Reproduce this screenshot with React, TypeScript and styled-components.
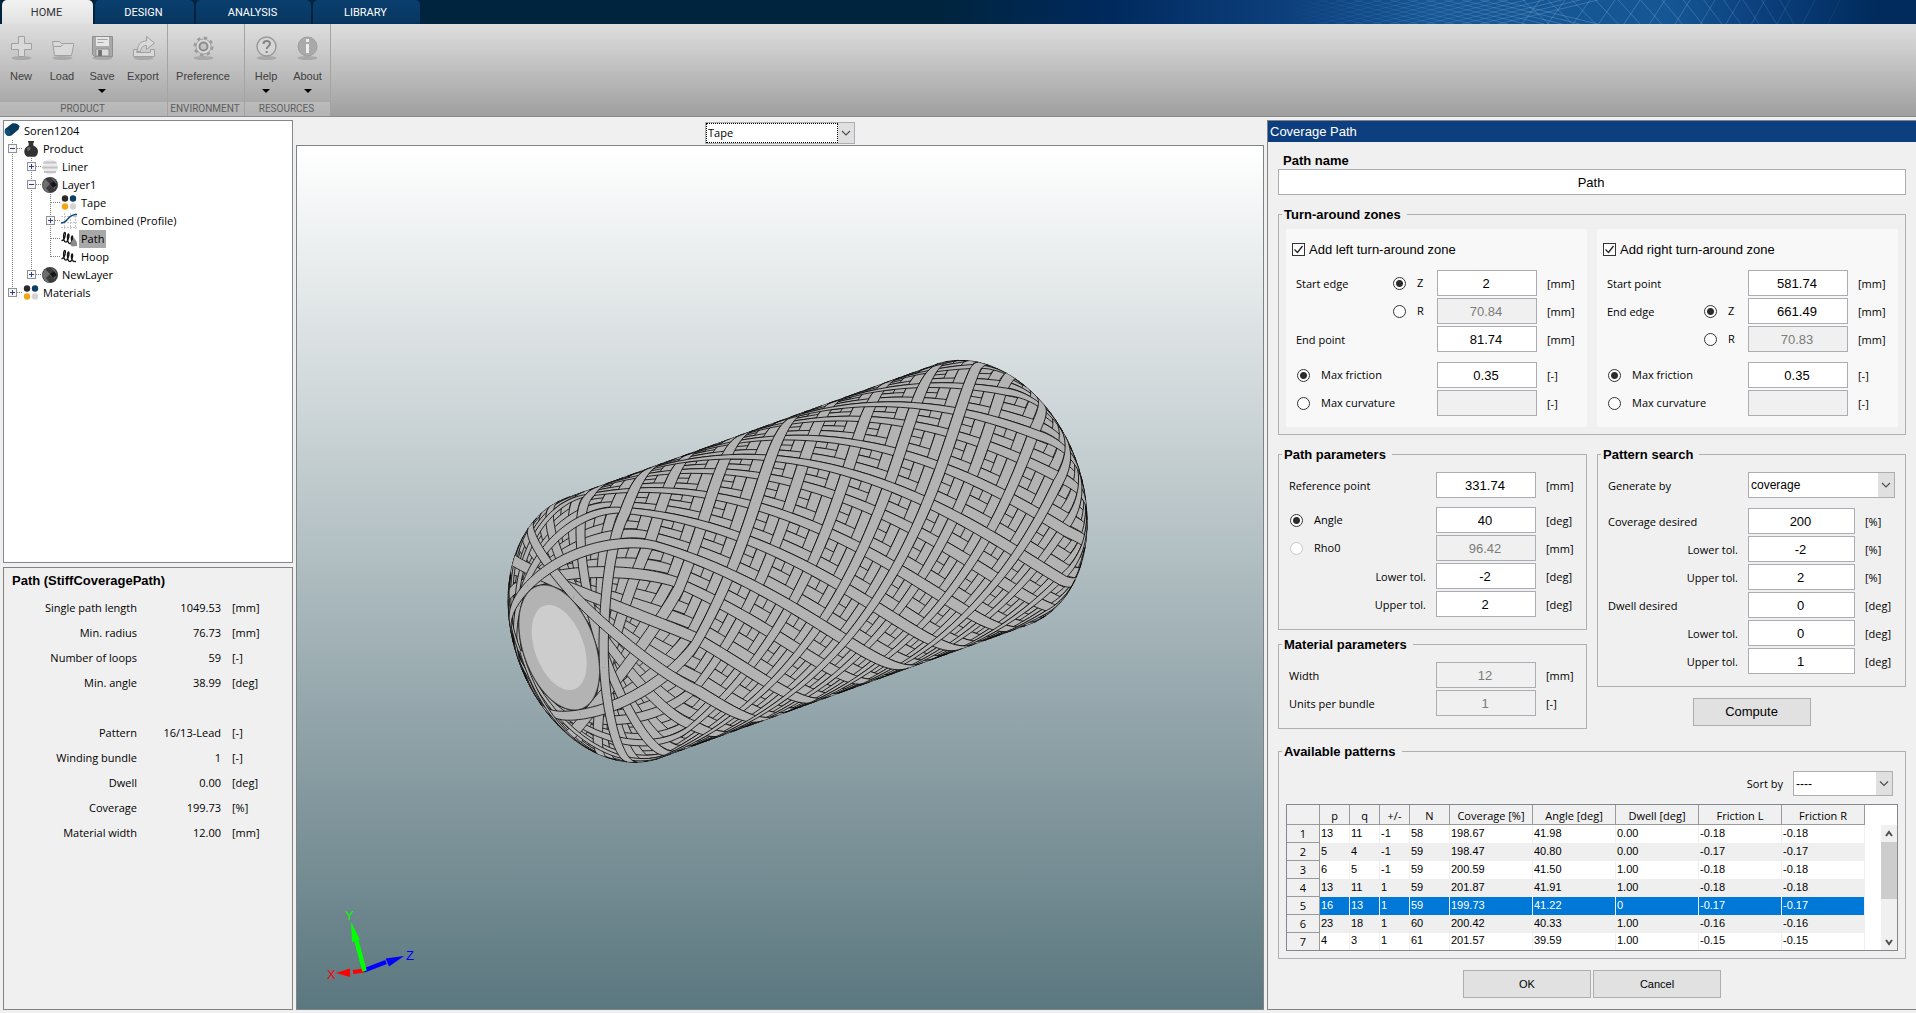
import React, { useMemo } from "react";
import styled, { createGlobalStyle, css } from "styled-components";

const UI = `"Open Sans", "Noto Sans", sans-serif`;
const ARIAL = `"Liberation Sans", Arial, sans-serif`;

const GlobalStyle = createGlobalStyle`
  *, *::before, *::after { box-sizing: border-box; }
  body { margin: 0; background: #f0f0f0; color: #000; font: 11px/16px ${UI}; }
  input, select, button { font: inherit; color: inherit; margin: 0; }
`;

const Shell = styled.div`
  display: flex;
  flex-direction: column;
  min-height: 100vh;
`;

/* ---------- ribbon ---------- */

const TabBar = styled.nav`
  display: grid;
  height: 24px;
  background: linear-gradient(90deg, #00243e 49%, #002a5e 58%, #0d3f7c 67%, #155694 75%, #155694 87%, #0b3f7c 92%, #002b5c 98%);
  overflow: hidden;
  & > * { grid-area: 1 / 1; }
`;

const TabList = styled.div`
  display: flex;
  gap: 2px;
  padding-left: 2px;
`;

const Tab = styled.button<{ $active?: boolean; $width: number }>`
  width: ${(p) => p.$width}px;
  border: 0;
  border-radius: 5px 5px 0 0;
  padding: 0 2px 2px 0;
  font: 11px/20px Roboto, ${ARIAL};
  color: ${(p) => (p.$active ? "#333" : "#fff")};
  background: ${(p) => (p.$active ? "linear-gradient(#f2f2f2, #dedede)" : "linear-gradient(#0a3f6e, #083762 75%, #042b4e)")};
`;

const Ribbon = styled.header`
  display: flex;
  height: 93px;
  border-bottom: 1px solid #8a8a8a;
  background: linear-gradient(#dedede, #9f9f9f);
`;

const Section = styled.section<{ $width: number }>`
  display: flex;
  flex-direction: column;
  width: ${(p) => p.$width}px;
  border-right: 1px solid #a4a4a4;
`;

const SectionTools = styled.div`
  display: flex;
  flex: 1;
`;

const SectionName = styled.div`
  height: 14px;
  padding-right: 2px;
  font: 10px/14px Roboto, ${ARIAL};
  text-align: center;
  color: #5e5e5e;
  background: rgba(255, 255, 255, 0.22);
`;

const Tool = styled.button<{ $width: number }>`
  display: flex;
  flex-direction: column;
  align-items: center;
  width: ${(p) => p.$width}px;
  border: 0;
  padding: 10px 0 0;
  background: none;
  color: #404040;
  font: 11px/16px ${ARIAL};
  & > svg { display: block; flex: none; }
  & > span { margin-top: 7px; }
`;

const Caret = styled.i`
  margin-top: 5px;
  border: 4px solid transparent;
  border-top-color: #000;
  border-bottom: 0;
`;

/* ---------- body ---------- */

const Workspace = styled.main`
  flex: 1;
  display: grid;
  grid-template-columns: 290px minmax(0, 1fr) 649px;
  gap: 3px;
  padding: 3px 0 3px 3px;
`;

const LeftColumn = styled.div`
  display: grid;
  grid-template-rows: 1fr 1fr;
  gap: 4px;
`;

const TreeBox = styled.ul`
  margin: 0;
  padding: 1px 0 0;
  list-style: none;
  border: 1px solid #828790;
  background: #fff;
  font: 12px/18px ${UI};
`;

const TreeRow = styled.li`
  display: flex;
  height: 18px;
  & > svg { flex: none; display: block; }
`;

const TreeLabel = styled.span<{ $selected?: boolean }>`
  margin-left: 2px;
  padding: 0 2px;
  font-size: 11px;
  background: ${(p) => (p.$selected ? "#a8a8a8" : "none")};
`;

const InfoBox = styled.section`
  border: 1px solid #828282;
  padding: 4px 8px;
`;

const Heading = styled.h2`
  margin: 0;
  font: bold 13px/18px ${ARIAL};
`;

const InfoGrid = styled.dl`
  display: grid;
  grid-template-columns: 125px 84px 1fr;
  grid-auto-rows: 25px;
  align-items: center;
  margin: 5px 0 0;
  & > dt, & > dd { margin: 0; text-align: right; }
`;

const InfoUnit = styled.dd`
  && { padding-left: 11px; text-align: left; }
`;

const InfoBreak = styled.div`
  grid-column: 1 / -1;
`;

const Stage = styled.div`
  display: flex;
  flex-direction: column;
`;

const StageBar = styled.div`
  display: flex;
  justify-content: center;
  height: 25px;
  padding-top: 2px;
`;

const Canvas3D = styled.div`
  flex: 1;
  min-height: 0;
  border: 1px solid #7f8385;
  background: linear-gradient(#ffffff, #5b777f);
  & > svg { display: block; width: 100%; height: 100%; }
`;

/* ---------- form controls ---------- */

const SelectFrame = styled.div<{ $width?: number; $height: number; $focus?: boolean }>`
  display: grid;
  grid-template-columns: 1fr 16px;
  width: ${(p) => (p.$width ? `${p.$width}px` : "auto")};
  height: ${(p) => p.$height}px;
  border: 1px solid #abadb3;
  background: #fff;
  & > select {
    grid-area: 1 / 1 / 2 / 3;
    appearance: none;
    width: 100%;
    border: 0;
    border-radius: 0;
    outline: 0;
    padding: 0 16px 0 2px;
    background: none;
    font: ${(p) => (p.$focus ? `11px/16px ${UI}` : `12px/16px ${ARIAL}`)};
  }
  & > svg {
    grid-area: 1 / 2;
    width: 16px;
    height: 100%;
    background: #e0e0e0;
    pointer-events: none;
  }
  ${(p) => p.$focus && css`
    & > select { padding: 0 1px; margin-right: 16px; width: calc(100% - 16px); border: 1px dotted #000; }
  `}
`;

const TextField = styled.input`
  width: 100%;
  height: 26px;
  border: 1px solid #abadb3;
  border-radius: 0;
  padding: 0 5px 0 3px;
  background: #fff;
  text-align: center;
  font: 13px/16px ${ARIAL};
  &:disabled { background: #f0f0f0; color: #7b7b7b; }
`;

const Radio = styled.input.attrs({ type: "radio" })`
  appearance: none;
  flex: none;
  width: 13px;
  height: 13px;
  border: 1px solid #333;
  border-radius: 50%;
  background: #fff;
  &:checked { background: radial-gradient(circle, #2b2b2b 3px, #fff 4px); }
  &:disabled { border-color: #c8c8c8; }
`;

const CheckFrame = styled.span`
  display: grid;
  & > * { grid-area: 1 / 1; }
  & > input { appearance: none; width: 13px; height: 13px; border: 1px solid #333; background: #fff; }
  & > svg { pointer-events: none; }
`;

const PushButton = styled.button<{ $width: number; $large?: boolean }>`
  width: ${(p) => p.$width}px;
  height: 28px;
  border: 1px solid #adadad;
  padding: 0;
  background: #e1e1e1;
  font: ${(p) => (p.$large ? 13 : 11)}px/16px ${ARIAL};
`;

/* ---------- right-hand dialog ---------- */

const Dialog = styled.aside`
  border: 1px solid #828282;
  border-right: 0;
`;

const DialogTitle = styled.h1`
  margin: 0;
  padding-left: 2px;
  background: #0d3f80;
  color: #fff;
  font: 13px/21px ${ARIAL};
`;

const DialogBody = styled.form`
  display: flex;
  flex-direction: column;
  gap: 11px;
  padding: 11px 10px;
`;

const NameLabel = styled.label`
  display: block;
  padding-left: 5px;
  font: bold 13px/16px ${ARIAL};
`;

const Group = styled.fieldset<{ $pad: string }>`
  min-width: 0;
  margin: 0;
  border: 1px solid #b0b0b0;
  padding: ${(p) => p.$pad};
  & > legend {
    margin-left: 3px;
    padding: 0 6px 0 2px;
    font: bold 13px/17px ${ARIAL};
  }
`;

/* the legend keeps the same inset whatever the side padding of its group */
const Inset = styled.div<{ $x: number }>`
  padding: 0 ${(p) => p.$x}px;
`;

const TwoUp = styled.div<{ $bottom?: number }>`
  display: grid;
  grid-template-columns: 1fr 1fr;
  gap: 10px;
  align-items: start;
  padding-bottom: ${(p) => p.$bottom ?? 0}px;
`;

const Stack = styled.div<{ $gap: number }>`
  display: flex;
  flex-direction: column;
  gap: ${(p) => p.$gap}px;
`;

const Zone = styled.div`
  padding-bottom: 11px;
  background: #f8f8f8;
`;

const ZoneToggle = styled.label`
  display: flex;
  align-items: center;
  gap: 4px;
  height: 41px;
  padding-left: 6px;
  font: 13px/16px ${ARIAL};
`;

const Row = styled.div<{ $field?: number }>`
  display: grid;
  grid-template-columns: minmax(0, 1fr) ${(p) => p.$field ?? 100}px 50px;
  align-items: center;
  padding-left: 10px;
`;

const RowLabel = styled.div<{ $right?: boolean }>`
  display: flex;
  align-items: center;
  justify-content: ${(p) => (p.$right ? "flex-end" : "space-between")};
  padding-right: ${(p) => (p.$right ? 10 : 0)}px;
`;

const Caption = styled.label`
  padding-top: 2px;
`;

const RadioLabel = styled.label<{ $width?: number }>`
  display: flex;
  align-items: center;
  gap: 11px;
  padding-left: ${(p) => (p.$width ? 0 : 1)}px;
  width: ${(p) => (p.$width ? `${p.$width}px` : "auto")};
`;

const Unit = styled.span`
  padding: 2px 0 0 10px;
`;

const WideSelect = styled.div`
  grid-column: 2 / 4;
  margin-right: 10px;
`;

const Centered = styled.div`
  display: flex;
  justify-content: center;
  gap: 2px;
`;

const SortRow = styled.div`
  display: flex;
  justify-content: flex-end;
  align-items: center;
  gap: 10px;
  padding: 0 5px 8px 0;
`;

const TableFrame = styled.div`
  display: grid;
  grid-template-columns: 578px 1fr 16px;
  border: 1px solid #828790;
  background: #fff;
`;

const PatternTable = styled.table`
  border-collapse: separate;
  border-spacing: 0;
  table-layout: fixed;
  width: 578px;
  font: 11px/15px ${ARIAL};
  & th { padding: 0; background: #f0f0f0; font-weight: normal; font-family: ${UI}; }
  & thead th { height: 20px; padding-top: 2px; border-right: 1px solid #9a9a9a; border-bottom: 1px solid #9a9a9a; }
  & tbody th { border-right: 1px solid #9a9a9a; border-bottom: 1px solid #9a9a9a; }
  & tbody tr:last-child { height: 17px; }
  & tbody tr:last-child th { border-bottom: 0; }
  & td { padding: 0 0 2px 1px; border-right: 1px solid #efefef; }
`;

const PatternRow = styled.tr<{ $selected?: boolean; $odd: boolean }>`
  height: 18px;
  background: ${(p) => (p.$selected ? "#0078d7" : p.$odd ? "#fff" : "#efefef")};
  color: ${(p) => (p.$selected ? "#fff" : "#000")};
  & > th { color: #000; }
`;

const ScrollTrack = styled.div`
  display: flex;
  flex-direction: column;
  margin-top: 20px;
  background: #f0f0f0;
`;

const ScrollThumb = styled.div`
  height: 57px;
  background: #cdcdcd;
`;

/* ---------- wound vessel drawing ---------- */

const R = 150;
const R_TURN = 76.83;
const R_POLE = 70.84;
const Z0 = 2;
const DOME = 85;
const SHOULDER = Math.sqrt(1 - (R_POLE / R) ** 2) * DOME;
const ZL = Z0 + SHOULDER;
const ZR = 661.49 - SHOULDER;
const LOOPS = 59;
const ADVANCE = 2 * Math.PI * (1 + 48 / 59);
const SCALE = 0.92;
const COS = 0.836;
const SIN = 0.549;
const AX = [0.94, -0.34];
const NX = [0.34, 0.94];
const ORIGIN = [559.2 - 297, 647.5 - 146];
const ALPHA = (41.22 * Math.PI) / 180;

type P = { z: number; r: number; a: number; nz: number; nr: number };

const place = (z: number, r: number, a: number): [number, number] => {
  const along = SCALE * (COS * (z - Z0) + SIN * r * Math.sin(a));
  const across = SCALE * r * Math.cos(a);
  return [ORIGIN[0] + along * AX[0] + across * NX[0], ORIGIN[1] + along * AX[1] + across * NX[1]];
};

function domeProfile() {
  const steps = 44;
  const tMax = Math.acos(R_TURN / R);
  const cCyl = R * Math.sin(ALPHA);
  const out: { dz: number; r: number; a: number; nz: number; nr: number }[] = [];
  let a = 0;
  const at = (v: number) => {
    const t = tMax * (1 - v * v);
    return { t, r: R * Math.cos(t) };
  };
  for (let i = 0; i <= steps; i++) {
    const v = i / steps;
    const { t, r } = at(v);
    out.push({ dz: DOME * Math.sin(t), r, a, nz: -Math.sin(t) / DOME, nr: Math.cos(t) / R });
    if (i < steps) {
      const w = (i + 0.5) / steps;
      const m = at(w);
      const c = R_TURN + (cCyl - R_TURN) * ((m.r - R_TURN) / (R - R_TURN));
      const s = Math.min(0.99999, c / m.r);
      const tan = s / Math.sqrt(1 - s * s);
      const dm = Math.hypot(DOME * Math.cos(m.t), R * Math.sin(m.t)) * 2 * w * tMax / steps;
      a += (tan / m.r) * dm;
    }
  }
  const cyl = ((ZR - ZL) * Math.tan(ALPHA)) / R;
  const wanted = (ADVANCE - 2 * cyl) / 4;
  const k = wanted / a;
  return { pts: out.map((p) => ({ ...p, a: p.a * k })), half: wanted, cyl };
}

function buildLoop(): P[] {
  const { pts, half, cyl } = domeProfile();
  const pass: P[] = pts.map((p) => ({ z: ZL - p.dz, r: p.r, a: p.a, nz: p.nz, nr: p.nr }));
  const n = 48;
  for (let i = 1; i < n; i++)
    pass.push({ z: ZL + ((ZR - ZL) * i) / n, r: R, a: half + (cyl * i) / n, nz: 0, nr: 1 / R });
  const total = 2 * half + cyl;
  for (let i = pts.length - 1; i >= 0; i--) {
    const p = pts[i];
    pass.push({ z: ZR + p.dz, r: p.r, a: total - p.a, nz: -p.nz, nr: p.nr });
  }
  const back = pass.slice(0, -1).reverse().map((p) => ({ ...p, a: 2 * total - p.a }));
  return [...pass, ...back];
}

const fmt = (p: [number, number]) => `${p[0].toFixed(1)} ${p[1].toFixed(1)}`;

function windTape() {
  const loop = buildLoop();
  const half = 6;
  /* angle of the return pass where it crosses z = 401.6 on the last loop */
  let ref = 0;
  for (let i = Math.floor(loop.length / 2); i < loop.length - 1; i++)
    if (loop[i].z >= 401.6 && loop[i + 1].z < 401.6) {
      const f = (loop[i].z - 401.6) / (loop[i].z - loop[i + 1].z);
      ref = loop[i].a + f * (loop[i + 1].a - loop[i].a);
      break;
    }
  const start = 1.553 + ref + (LOOPS - 1) * ADVANCE;
  const xyz = (p: P, a: number) => [p.z, p.r * Math.cos(a), p.r * Math.sin(a)];
  const flat = (q: number[]): [number, number] => {
    const along = SCALE * (COS * (q[0] - Z0) + SIN * q[2]);
    const across = SCALE * q[1];
    return [ORIGIN[0] + along * AX[0] + across * NX[0], ORIGIN[1] + along * AX[1] + across * NX[1]];
  };
  const runs: { fill: string; edge: string }[] = [];
  for (let k = 0; k < LOOPS; k++) {
    let left: string[] = [];
    let right: string[] = [];
    const flush = () => {
      if (left.length > 1)
        runs.push({
          fill: `M${left.join("L")}L${[...right].reverse().join("L")}Z`,
          edge: `M${left.join("L")}M${right.join("L")}`,
        });
      left = [];
      right = [];
    };
    for (let i = 0; i < loop.length; i++) {
      const p = loop[i];
      const a = start - k * ADVANCE - p.a;
      const len = Math.hypot(p.nz, p.nr);
      const n = [p.nz / len, (p.nr / len) * Math.cos(a), (p.nr / len) * Math.sin(a)];
      const facing = -SIN * n[0] + COS * n[2];
      if (facing < -0.03) {
        flush();
        continue;
      }
      const h = loop[Math.min(i + 1, loop.length - 1)];
      const g = loop[Math.max(i - 1, 0)];
      const A = xyz(g, start - k * ADVANCE - g.a);
      const B = xyz(h, start - k * ADVANCE - h.a);
      const t = [B[0] - A[0], B[1] - A[1], B[2] - A[2]];
      const c = [n[1] * t[2] - n[2] * t[1], n[2] * t[0] - n[0] * t[2], n[0] * t[1] - n[1] * t[0]];
      const m = half / (Math.hypot(c[0], c[1], c[2]) || 1);
      const q = xyz(p, a);
      left.push(fmt(flat([q[0] + c[0] * m, q[1] + c[1] * m, q[2] + c[2] * m])));
      right.push(fmt(flat([q[0] - c[0] * m, q[1] - c[1] * m, q[2] - c[2] * m])));
    }
    flush();
  }
  return runs;
}

const ring = (z: number, r: number) =>
  `M${Array.from({ length: 72 }, (_, i) => fmt(place(z, r, (i * Math.PI) / 36))).join("L")}Z`;

function Axes() {
  return (
    <g fontFamily="Liberation Sans, Arial, sans-serif" fontSize="13">
      <path d="M67 824.500L56 826" stroke="#f00" strokeWidth="4" />
      <path d="M39 827L53 822.500V831Z" fill="#f00" />
      <path d="M67 824.500L89 816" stroke="#00f" strokeWidth="4.500" />
      <path d="M107 810L88.500 812.500L92 820.500Z" fill="#00f" />
      <path d="M67.500 825L59.500 795" stroke="#0f0" strokeWidth="4.500" />
      <path d="M54 776L55 796L63 794Z" fill="#0f0" />
      <text x="30" y="833" fill="#f00">X</text>
      <text x="48" y="774" fill="#0f0">Y</text>
      <text x="109" y="814" fill="#00f">Z</text>
    </g>
  );
}

function Vessel() {
  const runs = useMemo(windTape, []);
  return (
    <svg viewBox="0 0 966 863" preserveAspectRatio="xMidYMid meet" role="img" aria-label="Wound vessel">
      {runs.map((r, i) => (
        <g key={i}>
          <path d={r.fill} fill="#b3b3b3" />
          <path d={r.edge} fill="none" stroke="#0a0a0a" strokeWidth="0.850" />
        </g>
      ))}
      <path d={ring(Z0, R_POLE)} fill="#b3b3b3" stroke="#333" strokeWidth="0.700" />
      <path d={ring(Z0, 48.3)} fill="#cdcdcd" />
      <Axes />
    </svg>
  );
}

/* ---------- icons ---------- */

type ToolIconName = "new" | "load" | "save" | "export" | "gear" | "help" | "about";

function ToolIcon({ name }: { name: ToolIconName }) {
  const s = { fill: "#d9d9d9", stroke: "#a0a0a0", strokeWidth: 1 };
  const art: Record<ToolIconName, React.ReactNode> = {
    new: <path d="M9.500 2.500h6v7h7v6h-7v7h-6v-7h-7v-6h7z" {...s} />,
    load: <path d="M4.500 21.500L2.500 7.500H9.500L11.500 9.500H23.500V12L21.500 21.500Z M4 12.500H11L13 10.500" {...s} />,
    save: (
      <>
        <path d="M2.500 2.500h20v20h-18l-2-2z" fill="#a9a9a9" stroke="#8f8f8f" />
        <path d="M6 3h13v9H6z" fill="#e6e6e6" />
        <path d="M7.500 5.500h10M7.500 8.500h6" stroke="#a2a2a2" />
        <path d="M6 15h13v7H6z" fill="#dcdcdc" stroke="#8f8f8f" />
        <path d="M8 16h4v6H8z" fill="#757575" />
      </>
    ),
    export: (
      <>
        <path d="M2.500 22.500v-7h4l-1 3h14v-3h4v7z" {...s} />
        <path d="M6.500 17.500c0-7 3-10.500 9-10.500V2.500L23.500 9l-8 6.500V11.500c-4 0-5.500 2-6 6z" {...s} />
      </>
    ),
    gear: (
      <>
        <circle cx="12.500" cy="12.500" r="8.500" fill="none" stroke="#9c9c9c" strokeWidth="3" strokeDasharray="3.340 3.340" />
        <circle cx="12.500" cy="12.500" r="7.500" {...s} />
        <circle cx="12.500" cy="12.500" r="4" fill="#c4c4c4" stroke="#8c8c8c" strokeWidth="2" />
      </>
    ),
    help: (
      <>
        <circle cx="12.500" cy="12.500" r="9.500" fill="#d6d6d6" stroke="#9a9a9a" strokeWidth="1.500" />
        <path d="M9.500 10c0-4 6.500-4 6.500-.3 0 2.600-3.300 2.500-3.300 5.300M12.700 17v2" fill="none" stroke="#858585" strokeWidth="2" />
      </>
    ),
    about: (
      <>
        <circle cx="12.500" cy="12.500" r="9.500" fill="#a9a9a9" stroke="#9f9f9f" />
        <path d="M12.500 5v3M12.500 10v9" stroke="#ededed" strokeWidth="3" />
      </>
    ),
  };
  return (
    <svg width="25" height="27" viewBox="0 0 25 27" aria-hidden="true">
      <ellipse cx="12.500" cy="24" rx="10" ry="2" fill="#8b8b8b" opacity="0.500" />
      {art[name]}
    </svg>
  );
}

type TreeIconName = "vessel" | "flask" | "liner" | "layer" | "dots" | "profile" | "path" | "hoop";

function TreeIcon({ name }: { name: TreeIconName }) {
  const coil = "M.5 10.500C3.500 11 5.500 2.500 3.800 2.500S2 11 4.500 12 9 4 7.500 4 6 12.500 8.500 13.500 12.500 6 11.200 6 9.500 14.500 15 13.500";
  return (
    <svg width="16" height="18" viewBox="0 0 16 18" aria-hidden="true">
      {name === "vessel" && (
        <>
          <path d="M1 7L8 1.500C11 .5 15 2 15.500 4.500L14.500 7.500L7.500 13.500C3.500 15.500 0 11 1 7Z" fill="#063a5e" />
          <ellipse cx="3.500" cy="10.500" rx="2.500" ry="3.500" transform="rotate(-25 3.500 10.500)" fill="#0f5079" />
        </>
      )}
      {name === "flask" && (
        <>
          <path d="M5 1h6v1.500h-.7v3C17 8 15.500 15 12 16.800H4.500C.5 15 -.5 8 5.700 5.500v-3H5z" fill="#323232" />
          <path d="M4 8c2-1.500 3-1 3.500 0S6 11 4.500 11z" fill="#6a6a6a" />
        </>
      )}
      {name === "liner" && (
        <>
          <circle cx="8" cy="9" r="7.800" fill="#ececec" />
          <path d="M1.500 4.500h13M.3 9.500h15.400M2 14h12" stroke="#c2c2c2" strokeWidth="2" />
        </>
      )}
      {name === "layer" && (
        <>
          <circle cx="8" cy="9" r="8" fill="#3b3b3b" />
          <path d="M3 3l5 5-4 4 4 5-5-2-3-6zM8 1l4 4-4 4 4 4 3-4-2-5z" fill="#6f6f6f" />
          <path d="M8 8l4-3 3 4-4 3z" fill="#161616" />
        </>
      )}
      {name === "dots" && (
        <>
          <circle cx="4" cy="4.500" r="3.200" fill="#2a2a2a" />
          <circle cx="12" cy="4.500" r="3.200" fill="#0d3f66" />
          <circle cx="4" cy="12.500" r="3.200" fill="#f2a516" />
          <circle cx="12" cy="12.500" r="3.200" fill="#d4d4d4" />
        </>
      )}
      {name === "profile" && (
        <>
          <path d="M3.500 1v16M9.500 1v16M14.500 1v16M0 4.500h16M0 10.500h16M0 15.500h16" stroke="#c9c9c9" strokeDasharray="2 1" />
          <path d="M0 11C8 11 5 2.500 16 2.500" fill="none" stroke="#174f7a" strokeWidth="1.500" />
        </>
      )}
      {(name === "path" || name === "hoop") && <path d={coil} fill="none" stroke="#151515" strokeWidth="1.300" />}
      {name === "path" && <path d="M13 7.500l3 5v3.500l-5 .5-2-2z" fill="#8b8b8b" />}
    </svg>
  );
}

type Guide = "" | "|" | "+" | "-" | "t" | "l" | "p" | "e";

/* one indent step: "+" / "-" hold an expander, "t" / "l" a branch, "|" a passing line, "p" a closing expander */
function GuideCell({ kind }: { kind: Guide }) {
  const line = { stroke: "#7d7d7d", strokeDasharray: "1 1" };
  const box = kind === "+" || kind === "-" || kind === "p";
  return (
    <svg width="19" height="18" aria-hidden="true">
      {kind !== "" && <line x1="8.500" y1="0" x2="8.500" y2={kind === "l" || kind === "p" ? 9 : 18} {...line} />}
      {kind !== "" && kind !== "|" && <line x1="9" y1="8.500" x2="19" y2="8.500" {...line} />}
      {box && (
        <>
          <rect x="4.500" y="4.500" width="8" height="8" fill="#f6f6f6" stroke="#919191" />
          <path d={kind === "-" ? "M6 8.500h5" : "M6 8.500h5M8.500 6v5"} stroke="#2b3f8c" />
        </>
      )}
    </svg>
  );
}

function Chevron() {
  return (
    <svg viewBox="0 0 16 20" aria-hidden="true">
      <path d="M4 8l4 4 4-4" fill="none" stroke="#505050" strokeWidth="1.200" />
    </svg>
  );
}

function BannerMesh() {
  const lines: string[] = [];
  for (let i = 0; i < 16; i++) {
    lines.push(`M${280 + i * 18} 0L${380 + i * 18} 24`, `M${380 + i * 18} 0L${280 + i * 18} 24`);
  }
  for (let i = 0; i < 13; i++) {
    lines.push(`M${575 + i * 25 - i * i * 0.3} 0l${26 - i} 24`, `M${592 + i * 25} 0l${-18 + i * 0.5} 24`);
  }
  return (
    <svg width="100%" height="24" viewBox="0 0 968 24" preserveAspectRatio="xMaxYMid slice" aria-hidden="true">
      <defs>
        <linearGradient id="mesh-fade" gradientUnits="userSpaceOnUse" x1="340" x2="930" y1="0" y2="0">
          <stop offset="0" stopColor="#6fa0cc" stopOpacity="0" />
          <stop offset="0.300" stopColor="#6fa0cc" stopOpacity="0.280" />
          <stop offset="0.450" stopColor="#6fa0cc" stopOpacity="0.420" />
          <stop offset="0.650" stopColor="#6fa0cc" stopOpacity="0.420" />
          <stop offset="1" stopColor="#6fa0cc" stopOpacity="0" />
        </linearGradient>
      </defs>
      <path d={lines.join("")} stroke="url(#mesh-fade)" fill="none" />
    </svg>
  );
}

const MeshSlot = styled.div`
  justify-self: end;
  width: 968px;
`;

/* ---------- data ---------- */

const TREE: { guides: Guide[]; icon: TreeIconName; text: string; selected?: boolean }[] = [
  { guides: [], icon: "vessel", text: "Soren1204" },
  { guides: ["-"], icon: "flask", text: "Product" },
  { guides: ["|", "+"], icon: "liner", text: "Liner" },
  { guides: ["|", "-"], icon: "layer", text: "Layer1" },
  { guides: ["|", "|", "t"], icon: "dots", text: "Tape" },
  { guides: ["|", "|", "+"], icon: "profile", text: "Combined (Profile)" },
  { guides: ["|", "|", "t"], icon: "path", text: "Path", selected: true },
  { guides: ["|", "|", "l"], icon: "hoop", text: "Hoop" },
  { guides: ["|", "p"], icon: "layer", text: "NewLayer" },
  { guides: ["p"], icon: "dots", text: "Materials" },
];

const INFO: ([string, string, string] | null)[] = [
  ["Single path length", "1049.53", "[mm]"],
  ["Min. radius", "76.73", "[mm]"],
  ["Number of loops", "59", "[-]"],
  ["Min. angle", "38.99", "[deg]"],
  null,
  ["Pattern", "16/13-Lead", "[-]"],
  ["Winding bundle", "1", "[-]"],
  ["Dwell", "0.00", "[deg]"],
  ["Coverage", "199.73", "[%]"],
  ["Material width", "12.00", "[mm]"],
];

const COLUMNS: [string, number][] = [
  ["", 33], ["p", 30], ["q", 30], ["+/-", 30], ["N", 40],
  ["Coverage [%]", 83], ["Angle [deg]", 83], ["Dwell [deg]", 83], ["Friction L", 83], ["Friction R", 83],
];

const PATTERNS = [
  ["13", "11", "-1", "58", "198.67", "41.98", "0.00", "-0.18", "-0.18"],
  ["5", "4", "-1", "59", "198.47", "40.80", "0.00", "-0.17", "-0.17"],
  ["6", "5", "-1", "59", "200.59", "41.50", "1.00", "-0.18", "-0.18"],
  ["13", "11", "1", "59", "201.87", "41.91", "1.00", "-0.18", "-0.18"],
  ["16", "13", "1", "59", "199.73", "41.22", "0", "-0.17", "-0.17"],
  ["23", "18", "1", "60", "200.42", "40.33", "1.00", "-0.16", "-0.16"],
  ["4", "3", "1", "61", "201.57", "39.59", "1.00", "-0.15", "-0.15"],
];

/* ---------- form pieces ---------- */

type FieldProps = {
  id: string;
  label?: string;
  radio?: { name: string; text: string; checked?: boolean; disabled?: boolean; inline?: boolean };
  right?: boolean;
  value: string;
  unit: string;
  disabled?: boolean;
  field?: number;
};

function Field({ id, label, radio, right, value, unit, disabled, field }: FieldProps) {
  return (
    <Row $field={field}>
      <RowLabel $right={right}>
        {label ? <Caption htmlFor={id}>{label}</Caption> : radio?.inline ? <span /> : null}
        {radio && (
          <RadioLabel $width={radio.inline ? 44 : undefined}>
            <Radio name={radio.name} defaultChecked={radio.checked} disabled={radio.disabled} />
            {radio.text}
          </RadioLabel>
        )}
      </RowLabel>
      <TextField id={id} defaultValue={value} disabled={disabled} aria-label={label ?? radio?.text} />
      <Unit>{unit}</Unit>
    </Row>
  );
}

function ZonePanel({ side }: { side: "left" | "right" }) {
  const l = side === "left";
  const edge = `${side}-edge`;
  return (
    <Zone>
      <ZoneToggle>
        <CheckFrame>
          <input type="checkbox" defaultChecked />
          <svg width="13" height="13" aria-hidden="true">
            <path d="M2.500 6.500l3 3 5-6.500" fill="none" stroke="#222" strokeWidth="1.300" />
          </svg>
        </CheckFrame>
        Add {side} turn-around zone
      </ZoneToggle>
      <Stack $gap={10}>
        <Stack $gap={2}>
          {l ? (
            <>
              <Field id="l-z" label="Start edge" radio={{ name: edge, text: "Z", checked: true, inline: true }} value="2" unit="[mm]" />
              <Field id="l-r" radio={{ name: edge, text: "R", inline: true }} value="70.84" unit="[mm]" disabled />
              <Field id="l-end" label="End point" value="81.74" unit="[mm]" />
            </>
          ) : (
            <>
              <Field id="r-start" label="Start point" value="581.74" unit="[mm]" />
              <Field id="r-z" label="End edge" radio={{ name: edge, text: "Z", checked: true, inline: true }} value="661.49" unit="[mm]" />
              <Field id="r-r" radio={{ name: edge, text: "R", inline: true }} value="70.83" unit="[mm]" disabled />
            </>
          )}
        </Stack>
        <Stack $gap={2}>
          <Field id={`${side}-fr`} radio={{ name: `${side}-lim`, text: "Max friction", checked: true }} value="0.35" unit="[-]" />
          <Field id={`${side}-cu`} radio={{ name: `${side}-lim`, text: "Max curvature" }} value="" unit="[-]" disabled />
        </Stack>
      </Stack>
    </Zone>
  );
}

function CoverageDialog() {
  return (
    <Dialog>
      <DialogTitle>Coverage Path</DialogTitle>
      <DialogBody onSubmit={(e) => e.preventDefault()}>
        <div>
          <NameLabel htmlFor="path-name">Path name</NameLabel>
          <TextField id="path-name" defaultValue="Path" />
        </div>

        <Group $pad="6px 0 7px">
          <legend>Turn-around zones</legend>
          <Inset $x={7}>
            <TwoUp>
              <ZonePanel side="left" />
              <ZonePanel side="right" />
            </TwoUp>
          </Inset>
        </Group>

        <TwoUp $bottom={3}>
          <Stack $gap={6}>
            <Group $pad="9px 0 12px">
              <legend>Path parameters</legend>
              <Stack $gap={9}>
                <Field id="ref" label="Reference point" value="331.74" unit="[mm]" />
                <Stack $gap={2}>
                  <Field id="angle" radio={{ name: "mode", text: "Angle", checked: true }} value="40" unit="[deg]" />
                  <Field id="rho" radio={{ name: "mode", text: "Rho0", disabled: true }} value="96.42" unit="[mm]" disabled />
                  <Field id="a-lo" label="Lower tol." right value="-2" unit="[deg]" />
                  <Field id="a-up" label="Upper tol." right value="2" unit="[deg]" />
                </Stack>
              </Stack>
            </Group>
            <Group $pad="9px 0 12px">
              <legend>Material parameters</legend>
              <Stack $gap={2}>
                <Field id="width" label="Width" value="12" unit="[mm]" disabled />
                <Field id="units" label="Units per bundle" value="1" unit="[-]" disabled />
              </Stack>
            </Group>
          </Stack>
          <Stack $gap={11}>
            <Group $pad="9px 0 12px">
              <legend>Pattern search</legend>
              <Stack $gap={10}>
                <Row $field={107}>
                  <Caption htmlFor="gen">Generate by</Caption>
                  <WideSelect>
                    <SelectFrame $height={26}>
                      <select id="gen" defaultValue="coverage">
                        <option>coverage</option>
                      </select>
                      <Chevron />
                    </SelectFrame>
                  </WideSelect>
                </Row>
                <Stack $gap={2}>
                  <Field id="cov" field={107} label="Coverage desired" value="200" unit="[%]" />
                  <Field id="c-lo" field={107} label="Lower tol." right value="-2" unit="[%]" />
                  <Field id="c-up" field={107} label="Upper tol." right value="2" unit="[%]" />
                  <Field id="dw" field={107} label="Dwell desired" value="0" unit="[deg]" />
                  <Field id="d-lo" field={107} label="Lower tol." right value="0" unit="[deg]" />
                  <Field id="d-up" field={107} label="Upper tol." right value="1" unit="[deg]" />
                </Stack>
              </Stack>
            </Group>
            <Centered>
              <PushButton type="button" $width={118} $large>Compute</PushButton>
            </Centered>
          </Stack>
        </TwoUp>

        <Group $pad="11px 0 7px">
          <legend>Available patterns</legend>
          <Inset $x={7}>
            <SortRow>
              <label htmlFor="sort">Sort by</label>
              <SelectFrame $width={100} $height={25}>
                <select id="sort" defaultValue="----">
                  <option>----</option>
                </select>
                <Chevron />
              </SelectFrame>
            </SortRow>
            <TableFrame>
              <PatternTable>
                <colgroup>
                  {COLUMNS.map(([name, w]) => <col key={name} style={{ width: w }} />)}
                </colgroup>
                <thead>
                  <tr>{COLUMNS.map(([name]) => <th key={name} scope="col">{name}</th>)}</tr>
                </thead>
                <tbody>
                  {PATTERNS.map((cells, i) => (
                    <PatternRow key={i} $odd={i % 2 === 0} $selected={i === 4}>
                      <th scope="row">{i + 1}</th>
                      {cells.map((c, j) => <td key={j}>{c}</td>)}
                    </PatternRow>
                  ))}
                </tbody>
              </PatternTable>
              <span />
              <ScrollTrack>
                <svg width="16" height="17" aria-hidden="true"><path d="M5 11l3-4 3 4" fill="none" stroke="#505050" strokeWidth="2" /></svg>
                <ScrollThumb />
                <svg width="16" height="51" aria-hidden="true"><path d="M5 41l3 4 3-4" fill="none" stroke="#505050" strokeWidth="2" /></svg>
              </ScrollTrack>
            </TableFrame>
          </Inset>
        </Group>

        <Centered>
          <PushButton type="submit" $width={128}>OK</PushButton>
          <PushButton type="button" $width={128}>Cancel</PushButton>
        </Centered>
      </DialogBody>
    </Dialog>
  );
}

function ToolButton({ icon, text, width, menu }: { icon: ToolIconName; text: string; width: number; menu?: boolean }) {
  return (
    <Tool $width={width}>
      <ToolIcon name={icon} />
      <span>{text}</span>
      {menu && <Caret />}
    </Tool>
  );
}

export default function App() {
  return (
    <Shell>
      <GlobalStyle />
      <TabBar>
        <MeshSlot><BannerMesh /></MeshSlot>
        <TabList>
          <Tab $active $width={91}>HOME</Tab>
          <Tab $width={99}>DESIGN</Tab>
          <Tab $width={115}>ANALYSIS</Tab>
          <Tab $width={107}>LIBRARY</Tab>
        </TabList>
      </TabBar>
      <Ribbon>
        <Section $width={168}>
          <SectionTools>
            <ToolButton icon="new" text="New" width={42} />
            <ToolButton icon="load" text="Load" width={40} />
            <ToolButton icon="save" text="Save" width={40} menu />
            <ToolButton icon="export" text="Export" width={42} />
          </SectionTools>
          <SectionName>PRODUCT</SectionName>
        </Section>
        <Section $width={77}>
          <SectionTools>
            <ToolButton icon="gear" text="Preference" width={70} />
          </SectionTools>
          <SectionName>ENVIRONMENT</SectionName>
        </Section>
        <Section $width={86}>
          <SectionTools>
            <ToolButton icon="help" text="Help" width={42} menu />
            <ToolButton icon="about" text="About" width={41} menu />
          </SectionTools>
          <SectionName>RESOURCES</SectionName>
        </Section>
      </Ribbon>
      <Workspace>
        <LeftColumn>
          <TreeBox>
            {TREE.map((row) => (
              <TreeRow key={row.text}>
                {row.guides.map((g, i) => <GuideCell key={i} kind={g} />)}
                <TreeIcon name={row.icon} />
                <TreeLabel $selected={row.selected}>{row.text}</TreeLabel>
              </TreeRow>
            ))}
          </TreeBox>
          <InfoBox>
            <Heading>Path (StiffCoveragePath)</Heading>
            <InfoGrid>
              {INFO.map((row, i) =>
                row ? (
                  <React.Fragment key={i}>
                    <dt>{row[0]}</dt>
                    <dd>{row[1]}</dd>
                    <InfoUnit>{row[2]}</InfoUnit>
                  </React.Fragment>
                ) : (
                  <InfoBreak key={i} />
                )
              )}
            </InfoGrid>
          </InfoBox>
        </LeftColumn>
        <Stage>
          <StageBar>
            <SelectFrame $width={150} $height={22} $focus>
              <select aria-label="View" defaultValue="Tape">
                <option>Tape</option>
              </select>
              <Chevron />
            </SelectFrame>
          </StageBar>
          <Canvas3D>
            <Vessel />
          </Canvas3D>
        </Stage>
        <CoverageDialog />
      </Workspace>
    </Shell>
  );
}
